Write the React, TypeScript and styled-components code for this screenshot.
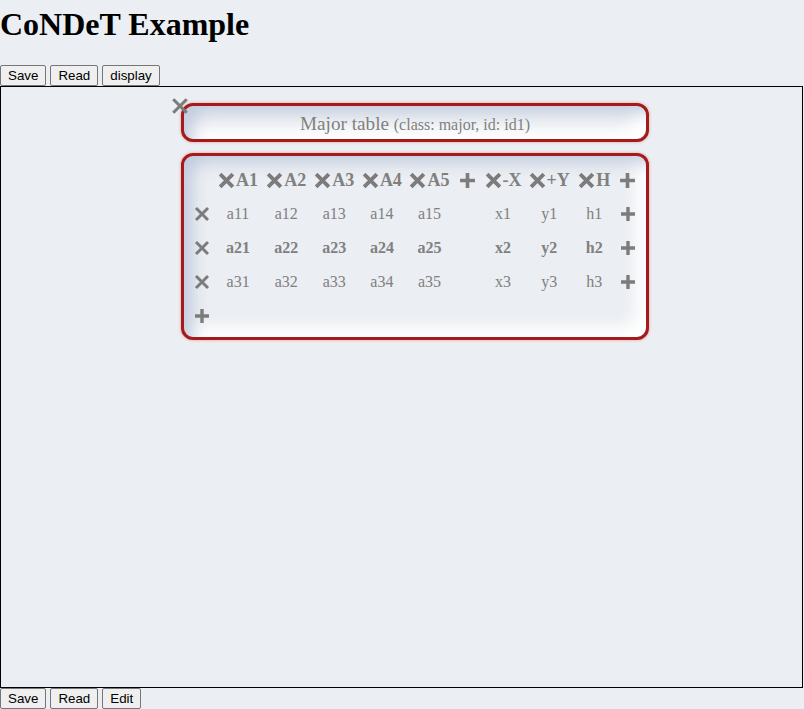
import React from "react";
import styled, { createGlobalStyle } from "styled-components";

const GlobalStyle = createGlobalStyle`
  body {
    margin: 0;
    background-color: #ebeef2;
    font-family: "Liberation Serif", "Times New Roman", serif;
  }
`;

const cols = ["A1", "A2", "A3", "A4", "A5"];
const extra = [
  { key: "x", label: "-X", width: 43 },
  { key: "y", label: "+Y", width: 49 },
  { key: "h", label: "H", width: 41 },
];
const aWidths = [48, 48, 48, 47, 48];

const rows = [1, 2, 3];

const XIcon = ({ size = 16, weight = 3 }: { size?: number; weight?: number }) => (
  <svg width={size} height={size} viewBox="0 0 16 16">
    <path d="M2 2 L14 14 M14 2 L2 14" stroke="#7c7c7c" strokeWidth={weight} fill="none" />
  </svg>
);

const PlusIcon = ({ size = 16 }: { size?: number }) => (
  <svg width={size} height={size} viewBox="0 0 16 16">
    <path d="M8 1 L8 15 M1 8 L15 8" stroke="#7c7c7c" strokeWidth="3.4" fill="none" />
  </svg>
);

export default function App() {
  return (
    <>
      <GlobalStyle />
      <Title>CoNDeT Example</Title>
      <Toolbar>
        <Button>Save</Button>
        <Button>Read</Button>
        <Button>display</Button>
      </Toolbar>
      <Canvas>
        <DeleteTable>
          <XIcon size={18} weight={2.8} />
        </DeleteTable>
        <Panel $left={180} $top={16} $height={39}>
          <Caption>
            Major table <small>(class: major, id: id1)</small>
          </Caption>
        </Panel>
        <Panel $left={180} $top={66} $height={187}>
          <Grid>
            <colgroup>
              <col style={{ width: 24 }} />
              {aWidths.map((w, i) => (
                <col key={i} style={{ width: w }} />
              ))}
              <col style={{ width: 28 }} />
              {extra.map((e) => (
                <col key={e.key} style={{ width: e.width }} />
              ))}
              <col style={{ width: 26 }} />
            </colgroup>
            <thead>
              <tr>
                <Th />
                {cols.map((c) => (
                  <Th key={c}>
                    <HeadInner>
                      <XIcon size={17} weight={3.6} />
                      {c}
                    </HeadInner>
                  </Th>
                ))}
                <Th>
                  <PlusIcon size={17} />
                </Th>
                {extra.map((e) => (
                  <Th key={e.key}>
                    <HeadInner>
                      <XIcon size={17} weight={3.6} />
                      {e.label}
                    </HeadInner>
                  </Th>
                ))}
                <Th>
                  <PlusIcon size={17} />
                </Th>
              </tr>
            </thead>
            <tbody>
              {rows.map((r) => (
                <tr key={r}>
                  <Td>
                    <XIcon />
                  </Td>
                  {cols.map((c, i) => (
                    <Td key={c} $bold={r === 2}>
                      a{r}
                      {i + 1}
                    </Td>
                  ))}
                  <Td />
                  {extra.map((e) => (
                    <Td key={e.key} $bold={r === 2}>
                      {e.key}
                      {r}
                    </Td>
                  ))}
                  <Td>
                    <PlusIcon />
                  </Td>
                </tr>
              ))}
              <tr>
                <Td>
                  <PlusIcon />
                </Td>
              </tr>
            </tbody>
          </Grid>
        </Panel>
      </Canvas>
      <Toolbar>
        <Button>Save</Button>
        <Button>Read</Button>
        <Button>Edit</Button>
      </Toolbar>
    </>
  );
}

const Title = styled.h1`
  font-size: 32px;
  font-weight: bold;
  margin: 6px 0 22px;
  line-height: 37px;
  color: #000;
`;

const Toolbar = styled.div`
  display: flex;
  gap: 4px;
`;

const Button = styled.button`
  font-family: "Liberation Sans", Arial, sans-serif;
  font-size: 13.33px;
  height: 21px;
  padding: 0 7px;
  border: 1px solid #767676;
  border-radius: 2px;
  background-color: #efefef;
  color: #000;
`;

const Canvas = styled.div`
  position: relative;
  box-sizing: border-box;
  width: 803px;
  height: 602px;
  border: 1px solid #000;
`;

const Panel = styled.div<{ $left: number; $top: number; $height: number }>`
  position: absolute;
  left: ${(p) => p.$left}px;
  top: ${(p) => p.$top}px;
  box-sizing: border-box;
  width: 468px;
  height: ${(p) => p.$height}px;
  border: 3px solid #a41b1b;
  border-radius: 12px;
  background-color: #ebeef2;
  box-shadow: 0 0 3px rgba(220, 40, 40, 0.45),
    inset 14px 12px 16px -6px #c2cbde,
    inset -16px -16px 16px -6px #ffffff;
  padding: 7px 6px 0;
`;

const DeleteTable = styled.div`
  position: absolute;
  left: 170px;
  top: 10px;
  z-index: 2;
  line-height: 0;
`;

const Caption = styled.div`
  text-align: center;
  color: #808080;
  font-size: 19.2px;
  line-height: 24px;
  margin-top: -1px;

  small {
    font-size: 16px;
  }
`;

const Grid = styled.table`
  border-collapse: collapse;
  table-layout: fixed;
  width: 451px;
  color: #808080;
`;

const Th = styled.th`
  height: 34px;
  padding: 0;
  font-size: 18px;
  font-weight: bold;
  text-align: center;
  vertical-align: middle;
  line-height: 0;

  & > svg {
    display: block;
    margin: 0 auto;
  }
`;

const HeadInner = styled.span`
  display: inline-flex;
  align-items: center;
  gap: 1px;
  line-height: 20px;
  white-space: nowrap;
`;

const Td = styled.td<{ $bold?: boolean }>`
  height: 34px;
  padding: 0;
  font-size: 16px;
  font-weight: ${(p) => (p.$bold ? "bold" : "normal")};
  text-align: center;
  vertical-align: middle;
  line-height: 20px;

  svg {
    display: block;
    margin: 0 auto;
  }
`;
